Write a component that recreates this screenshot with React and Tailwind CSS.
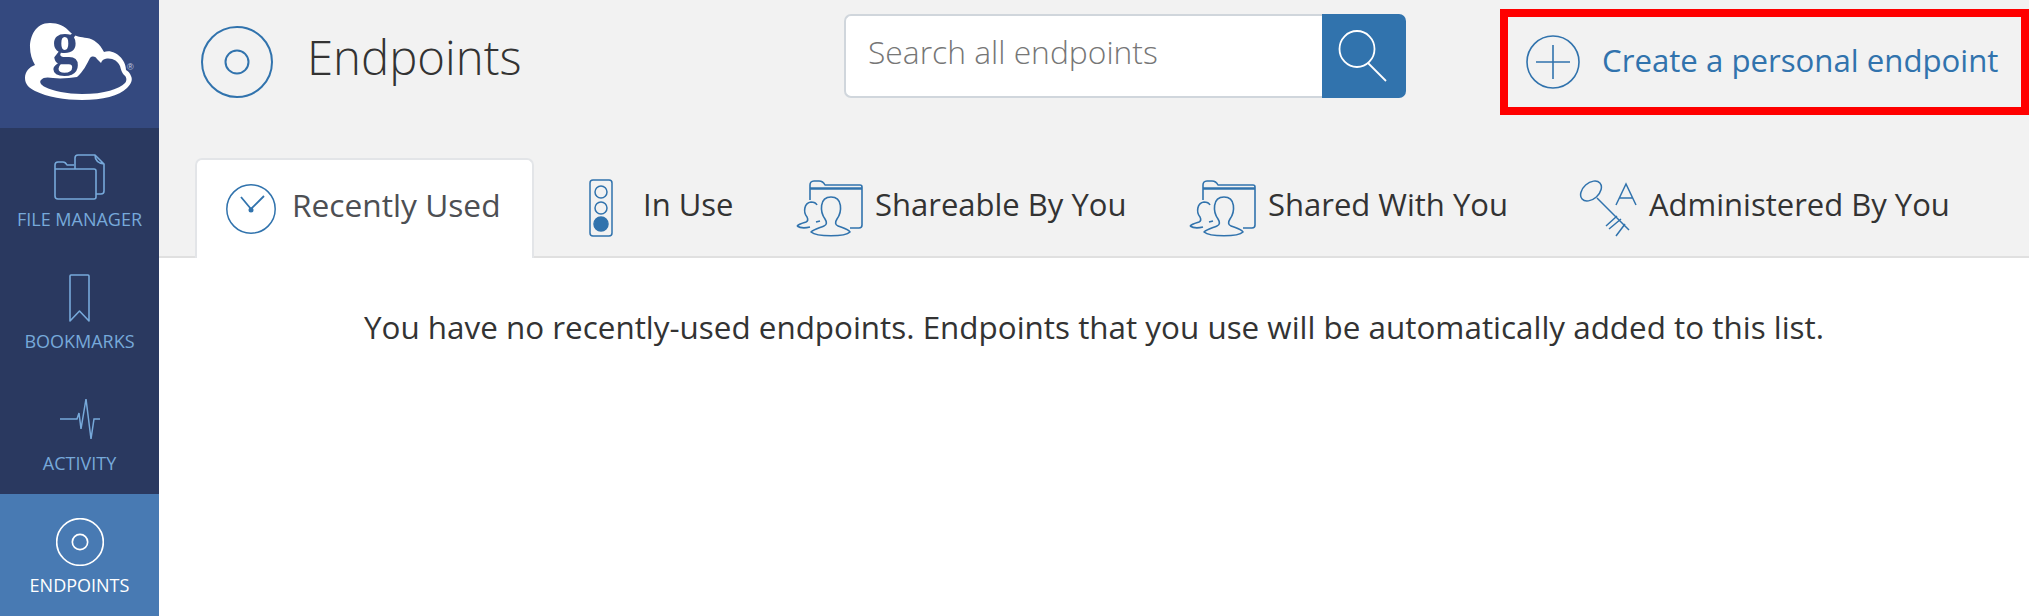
const font = { fontFamily: '"Open Sans", "Noto Sans", sans-serif' };

function Logo() {
  return (
    <svg width="130" height="110" viewBox="0 -10 130 110">
      <path fill="#fff" d="M35 13C20 13 15 27 15 37C15 44 17 50 20 55C14 57 10 62 10 68C10 74 14 78 20 81C32 87 50 90 67 90C88 90 104 86 112 78C116 74 118 70 116 66C115 63 113 61 111 60C111 53 106 46 100 43C96 41 92 41 89 42C85 34 79 29 72 28C66 27 60 27 55 22C50 16 43 13 35 13Z" />
      <path fill="#34497f" d="M62 67C68 62 72 54 75 48C77 46 80 46 82 49L86 53C87 50 89 49 92 48.500C98 48 103 51 105 56C106 60 107 63 109 65C112 67 112 71 110 73C104 79 90 84 67 84C52 84 38 81 30 77C26 75 24 72 26 70C28 67 33 67 38 68C46 69 55 68 62 67Z" />
      <text transform="translate(37 53) scale(.85 1)" fontSize="62" fontWeight="700" fill="#34497f" style={{ fontFamily: '"Liberation Serif", serif' }}>g</text>
      <text x="112" y="60" fontSize="9" fill="#c5cfe2" style={{ fontFamily: '"Liberation Sans", sans-serif' }}>®</text>
    </svg>
  );
}

function Disc({ size = 72, stroke = '#3173ad', sw = 2 }) {
  return (
    <svg width={size} height={size} viewBox="0 0 72 72" fill="none" stroke={stroke} strokeWidth={sw}>
      <circle cx="36" cy="36" r="35" />
      <circle cx="36" cy="36" r="11.500" />
    </svg>
  );
}

function FileIcon() {
  return (
    <svg width="51" height="46" viewBox="0 0 51 46" fill="none" stroke="#77a9da" strokeWidth="1.600" strokeLinejoin="round">
      <path d="M1 15V11c0-2 1-3 3-3h5c2 0 3 1 4 3h7M1 15h39c1 0 2 1 2 2v26c0 1-1 2-2 2H4c-2 0-3-1-3-3z" />
      <path d="M21 15V4c0-2 1-3 3-3h17l9 9v27c0 2-1 3-3 3h-5M41 1c0 5 2 8 9 9" />
    </svg>
  );
}

function BookmarkIcon() {
  return (
    <svg width="21" height="48" viewBox="0 0 21 48" fill="none" stroke="#77a9da" strokeWidth="1.600" strokeLinejoin="round">
      <path d="M2 1h17c.6 0 1 .4 1 1v45l-9.500-10L1 47V2c0-.6.4-1 1-1z" />
    </svg>
  );
}

function PulseIcon() {
  return (
    <svg width="40" height="41" viewBox="0 0 40 41" fill="none" stroke="#77a9da" strokeWidth="1.500" className="mb-[4px]">
      <path d="M0 20h17l2-6 2 16 5-30 5 40 3-20h6" />
    </svg>
  );
}

function ClockIcon() {
  return (
    <svg width="50" height="50" viewBox="0 0 50 50" fill="none" stroke="#3173ad" strokeWidth="1.500" className="shrink-0">
      <circle cx="25" cy="25" r="24.200" />
      <path d="M15 13l10 12L38 12" strokeWidth="1.800" />
      <circle cx="25" cy="26" r="2.500" fill="#3173ad" stroke="none" />
    </svg>
  );
}

function LightIcon() {
  return (
    <svg width="24" height="58" viewBox="0 0 24 58" fill="none" stroke="#3173ad" strokeWidth="1.500" className="shrink-0">
      <rect x="1" y="1" width="22" height="56" rx="3" />
      <circle cx="12" cy="13" r="6" />
      <circle cx="12" cy="29" r="6" />
      <circle cx="12" cy="45" r="7" fill="#3173ad" />
    </svg>
  );
}

function ShareIcon() {
  return (
    <svg width="67" height="57" viewBox="0 0 67 57" fill="none" stroke="#3173ad" strokeWidth="1.600" strokeLinejoin="round" className="shrink-0">
      <path d="M14 20V5c0-2 1-4 4-4h5c3 0 5 2 6 4h35c1 0 2 1 2 2v38c0 2-1 3-3 3H54" />
      <path d="M14 8.500h52" strokeWidth="2.500" />
      <path d="M1 46c2-2 6-3 9-4 2-1 2-3 1-5-4-5-3-14 4-15 3 0 5 1 6 3M1 46c3 2 9 2 13 1M20 42l4-1" />
      <path d="M15 52c3-3 8-4 13-6 3-1 3-4 1-7-5-7-6-22 6-22s11 15 6 22c-2 3-2 6 1 7 5 2 10 3 12 6-5 5-33 5-39 0z" />
    </svg>
  );
}

function KeyIcon() {
  return (
    <svg width="58" height="57" viewBox="0 0 58 57" fill="none" stroke="#3173ad" strokeWidth="1.500" className="shrink-0">
      <ellipse cx="12" cy="11" rx="12" ry="8" transform="rotate(-42 12 11)" />
      <path d="M18 18l32 32M27 46l11-10M30 49l12-10M37 56l9-12" />
      <path d="M37 25l10-21 10 21M40 18h14" />
    </svg>
  );
}

function SideItem({ icon, label, active }) {
  return (
    <div className={`h-[122px] flex flex-col items-center ${active ? 'bg-[#487ab3] text-white' : 'text-[#77a9da]'}`}>
      <div className="h-[72px] flex items-end">{icon}</div>
      <div className="mt-[5px] text-[18px] leading-[28px] whitespace-nowrap">{label}</div>
    </div>
  );
}

function Tab({ icon, label, className, textClass }) {
  return (
    <div className={`flex items-center text-[31px] text-[#333] ${className}`}>
      {icon}
      <span className={`whitespace-nowrap -mt-[7px] ${textClass}`}>{label}</span>
    </div>
  );
}

export default function App() {
  return (
    <div className="flex h-[616px] overflow-hidden bg-white" style={font}>
      <aside className="w-[159px] shrink-0 bg-[#2a3960]">
        <div className="h-[128px] bg-[#34497f] pl-[15px] pt-0">
          <div className="h-[10px]" />
          <div className="-mt-[10px]"><Logo /></div>
        </div>
        <SideItem icon={<FileIcon />} label="FILE MANAGER" />
        <SideItem icon={<BookmarkIcon />} label="BOOKMARKS" />
        <SideItem icon={<PulseIcon />} label="ACTIVITY" />
        <SideItem icon={<Disc size={48} stroke="#fff" sw={2.500} />} label="ENDPOINTS" active />
      </aside>

      <main className="flex-1 min-w-0">
        <div className="h-[258px] bg-[#f2f2f2] border-b-2 border-[#e0e0e0]">
          <div className="h-[158px] flex items-start">
            <div className="w-[685px] flex items-center pl-[42px] pt-[26px]">
              <Disc />
              <h1 className="ml-[34px] -mt-[10px] text-[47.300px] font-light text-[#333]">Endpoints</h1>
            </div>
            <div className="mt-[14px] flex w-[562px] h-[84px]">
              <div className="flex-1 bg-white border-2 border-r-0 border-[#d0d6dc] rounded-l-[7px] pl-[22px] pb-[8px] flex items-center text-[31.800px] font-light text-[#767676]">
                Search all endpoints
              </div>
              <div className="w-[84px] bg-[#3173ad] rounded-r-[7px]">
                <svg width="84" height="84" viewBox="0 0 84 84" fill="none" stroke="#fff" strokeWidth="1.800">
                  <ellipse cx="35" cy="35" rx="17.500" ry="18" />
                  <path d="M46 49l18 18" />
                </svg>
              </div>
            </div>
            <div className="ml-[94px] mt-[9px] w-[529px] h-[106px] border-[8px] border-[#ff0000] flex items-center pl-[18px]">
              <svg width="54" height="54" viewBox="0 0 54 54" fill="none" stroke="#3173ad" strokeWidth="1.600" className="shrink-0">
                <circle cx="27" cy="27" r="26" />
                <path d="M27 10v34M10 27h34" />
              </svg>
              <span className="ml-[22px] -mt-[4px] whitespace-nowrap text-[31.200px] text-[#3173ad]">Create a personal endpoint</span>
            </div>
          </div>
          <div className="flex h-[100px] pl-[36px]">
            <div className="w-[339px] h-[100px] bg-white border-2 border-b-0 border-[#e3e5e8] rounded-t-[7px] flex items-center pl-[29px] text-[31.700px] text-[#4d4f53]">
              <ClockIcon />
              <span className="ml-[16px] -mt-[8px] whitespace-nowrap">Recently Used</span>
            </div>
            <Tab icon={<LightIcon />} label="In Use" className="ml-[55px]" textClass="ml-[30px] w-[90px]" />
            <Tab icon={<ShareIcon />} label="Shareable By You" className="ml-[63px]" textClass="ml-[12px] w-[251px]" />
            <Tab icon={<ShareIcon />} label="Shared With You" className="ml-[63px]" textClass="ml-[12px] w-[239px]" />
            <Tab icon={<KeyIcon />} label="Administered By You" className="ml-[72px]" textClass="ml-[12px]" />
          </div>
        </div>
        <p className="mt-[45px] text-center text-[31.400px] text-[#333]">
          You have no recently-used endpoints. Endpoints that you use will be automatically added to this list.
        </p>
      </main>
    </div>
  );
}
